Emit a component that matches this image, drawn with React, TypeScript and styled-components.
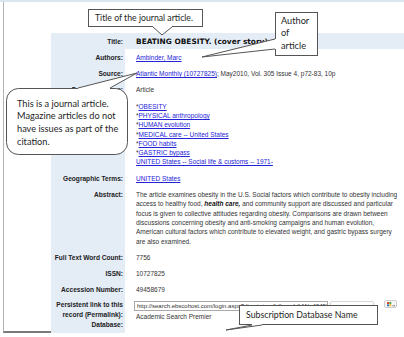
import React from 'react';
import styled, { createGlobalStyle } from 'styled-components';

const GlobalStyle = createGlobalStyle`
  html, body {
    margin: 0;
    padding: 0;
    background: #fff;
  }
`;

const Frame = styled.div`
  position: relative;
  width: 404px;
  height: 337px;
  overflow: hidden;
  box-sizing: border-box;
  background: #fff;
  border-top: 2px solid #dbe6f3;
  padding-left: 3px;
  font-family: 'Liberation Sans', Arial, sans-serif;
  color: #2b2b2b;
`;

const Page = styled.div`
  display: flex;
  flex-direction: column;
  height: 331px;
  box-sizing: border-box;
  border-left: 1px solid #b4b4b4;
  border-bottom: 2px solid #7a7a7a;
  padding: 31px 0 0 47px;
`;

const Record = styled.div`
  flex: 1;
  display: flex;
  flex-direction: column;
  background: linear-gradient(90deg, #e4ecf6 0 74px, #fff 74px);
  font-size: 6.5px;
  line-height: 9.3px;
`;

const Row = styled.div<{ $band?: boolean }>`
  display: grid;
  grid-template-columns: 74px 1fr;
  background: ${(p) => (p.$band ? '#e4ecf6' : 'transparent')};
`;

const Label = styled.div<{ $top?: number; $bottom?: number }>`
  padding: ${(p) => p.$top ?? 3.5}px 2px ${(p) => p.$bottom ?? 3.5}px 0;
  text-align: right;
  font-size: 6.6px;
  font-weight: bold;
  color: #222;
  white-space: nowrap;
`;

const Value = styled.div<{ $top?: number; $lift?: number }>`
  padding: ${(p) => p.$top ?? 3.5}px 0 3.5px 11px;
  margin-top: ${(p) => -(p.$lift ?? 0)}px;
  white-space: nowrap;
  color: #333;
`;

const Headline = styled.span`
  font-family: 'DejaVu Sans', Verdana, sans-serif;
  font-size: 7.4px;
  font-weight: bold;
  color: #111;
`;

const Link = styled.span`
  color: #2323d8;
  text-decoration: underline;
`;

const Star = styled.span`
  color: #333;
`;

const Em = styled.b`
  font-style: italic;
  color: #111;
`;

const LinkBar = styled.div`
  display: flex;
  align-items: flex-start;
  gap: 2px;
  margin-left: -2px;
`;

const Field = styled.div`
  width: 194px;
  height: 10px;
  box-sizing: border-box;
  border: 1px solid #a9a9a9;
  font-size: 6px;
  line-height: 8px;
  padding-left: 2px;
  overflow: hidden;
  color: #333;
`;

const GhostButton = styled.div`
  width: 42px;
  height: 9px;
  border: 1px solid #d6d6d6;
  border-radius: 2px;
  margin-right: 8px;
`;

const IconButton = styled.div`
  display: flex;
  align-items: center;
  width: 13px;
  height: 8px;
  box-sizing: border-box;
  padding-left: 2px;
  border: 1px solid #d0d0d0;
  border-radius: 2px;
  background: #f6f6f6;
  margin-top: -1px;
`;

const Balloon = styled.div<{ $x: number; $y: number; $w: number; $h: number }>`
  position: absolute;
  left: ${(p) => p.$x}px;
  top: ${(p) => p.$y}px;
  width: ${(p) => p.$w}px;
  height: ${(p) => p.$h}px;
`;

const BalloonShape = styled.svg`
  position: absolute;
  left: 0;
  top: 0;
  overflow: visible;
`;

const BalloonText = styled.div<{ $px: number; $py: number; $lh: number; $size: number }>`
  position: relative;
  padding: ${(p) => p.$py}px 0 0 ${(p) => p.$px}px;
  font-family: Lato, 'Liberation Sans', sans-serif;
  font-size: ${(p) => p.$size}px;
  line-height: ${(p) => p.$lh}px;
  color: #1e1e1e;
  white-space: nowrap;
`;

type Pt = [number, number];

interface BalloonProps {
  x: number;
  y: number;
  w: number;
  h: number;
  r?: number;
  side: 'top' | 'bottom' | 'left';
  tail: [Pt, Pt, Pt];
  px: number;
  py: number;
  lh?: number;
  size?: number;
  children: React.ReactNode;
}

function Callout ({ x, y, w, h, r = 0, side, tail, px, py, lh = 12.5, size = 9.2, children }: BalloonProps) {
  const [b1, tip, b2] = tail;
  const inset: Pt = side === 'top' ? [0, 1.5] : side === 'bottom' ? [0, -1.5] : [1.5, 0];
  const cover = [
    [b1[0] + inset[0], b1[1] + inset[1]],
    b1,
    tip,
    b2,
    [b2[0] + inset[0], b2[1] + inset[1]]
  ].map((p) => p.join(',')).join(' ');
  const edge = [b1, tip, b2].map((p) => p.join(',')).join(' ');

  return (
    <Balloon $x={x} $y={y} $w={w} $h={h}>
      <BalloonShape width={w} height={h}>
        <rect x={0.5} y={0.5} width={w - 1} height={h - 1} rx={r} fill='#fff' stroke='#555' strokeWidth={1} />
        <polygon points={cover} fill='#fff' />
        <polyline points={edge} fill='none' stroke='#555' strokeWidth={1} strokeLinejoin='miter' />
      </BalloonShape>
      <BalloonText $px={px} $py={py} $lh={lh} $size={size}>{children}</BalloonText>
    </Balloon>
  );
}

const subjects = [
  'OBESITY',
  'PHYSICAL anthropology',
  'HUMAN evolution',
  'MEDICAL care -- United States',
  'FOOD habits',
  'GASTRIC bypass'
];

function FlagIcon () {
  return (
    <svg width='8' height='5' viewBox='0 0 8 5'>
      <rect x='0' y='0' width='2' height='2' fill='#e2452c' />
      <rect x='2.3' y='0' width='2' height='2' fill='#47a845' />
      <rect x='0' y='2.3' width='2' height='2' fill='#2f7bd8' />
      <rect x='2.3' y='2.3' width='2' height='2' fill='#f2b822' />
      <rect x='5.5' y='3.3' width='1' height='1' fill='#555' />
      <rect x='7' y='3.3' width='1' height='1' fill='#555' />
    </svg>
  );
}

export default function App () {
  return (
    <Frame>
      <GlobalStyle />
      <Page>
        <Record>
          <Row $band>
            <Label>Title:</Label>
            <Value><Headline>BEATING OBESITY. (cover story)</Headline></Value>
          </Row>
          <Row>
            <Label>Authors:</Label>
            <Value><Link>Ambinder, Marc</Link></Value>
          </Row>
          <Row>
            <Label>Source:</Label>
            <Value><Link>Atlantic Monthly (10727825)</Link>; May2010, Vol. 305 Issue 4, p72-83, 10p</Value>
          </Row>
          <Row>
            <Label>Document Type:</Label>
            <Value>Article</Value>
          </Row>
          <Row>
            <Label>Subject Terms:</Label>
            <Value>
              {subjects.map((s) => (
                <div key={s}><Star>*</Star><Link>{s}</Link></div>
              ))}
              <div><Link>UNITED States -- Social life &amp; customs -- 1971-</Link></div>
            </Value>
          </Row>
          <Row>
            <Label>Geographic Terms:</Label>
            <Value><Link>UNITED States</Link></Value>
          </Row>
          <Row>
            <Label>Abstract:</Label>
            <Value>
              <div>The article examines obesity in the U.S. Social factors which contribute to obesity including</div>
              <div>access to healthy food, <Em>health care,</Em> and community support are discussed and particular</div>
              <div>focus is given to collective attitudes regarding obesity. Comparisons are drawn between</div>
              <div>discussions concerning obesity and anti-smoking campaigns and human evolution,</div>
              <div>American cultural factors which contribute to elevated weight, and gastric bypass surgery</div>
              <div>are also examined.</div>
            </Value>
          </Row>
          <Row>
            <Label>Full Text Word Count:</Label>
            <Value>7756</Value>
          </Row>
          <Row>
            <Label>ISSN:</Label>
            <Value>10727825</Value>
          </Row>
          <Row>
            <Label>Accession Number:</Label>
            <Value>49458679</Value>
          </Row>
          <Row>
            <Label $top={2} $bottom={1}>Persistent link to this<br />record (Permalink):</Label>
            <Value $top={3}>
              <LinkBar>
                <Field>http://search.ebscohost.com/login.aspx?direct=true&amp;db=aph&amp;AN=49458679</Field>
                <GhostButton />
                <IconButton><FlagIcon /></IconButton>
              </LinkBar>
            </Value>
          </Row>
          <Row>
            <Label $top={0.5}>Database:</Label>
            <Value $top={0} $lift={8}>Academic Search Premier</Value>
          </Row>
        </Record>
      </Page>

      <Callout x={88} y={7} w={115} h={18} side='bottom' tail={[[65, 18], [74, 26], [84, 18]]} px={7} py={2.5} size={8.7}>
        Title of the journal article.
      </Callout>
      <Callout x={275} y={10} w={43} h={44} side='left' tail={[[0, 27], [-73, 45], [0, 37]]} px={6} py={2.8}>
        Author<br />of<br />article
      </Callout>
      <Callout x={6} y={86} w={122} h={67} r={12} side='top' tail={[[72, 0], [131, -15], [104, 0]]} px={11} py={9.6} lh={12.7}>
        This is a journal article.<br />Magazine articles do not<br />have issues as part of the<br />citation.
      </Callout>
      <Callout x={239} y={303} w={139} h={20} side='bottom' tail={[[13, 20], [-13, 25], [23, 20]]} px={7} py={3.5} size={8.8}>
        Subscription Database Name
      </Callout>
    </Frame>
  );
}
